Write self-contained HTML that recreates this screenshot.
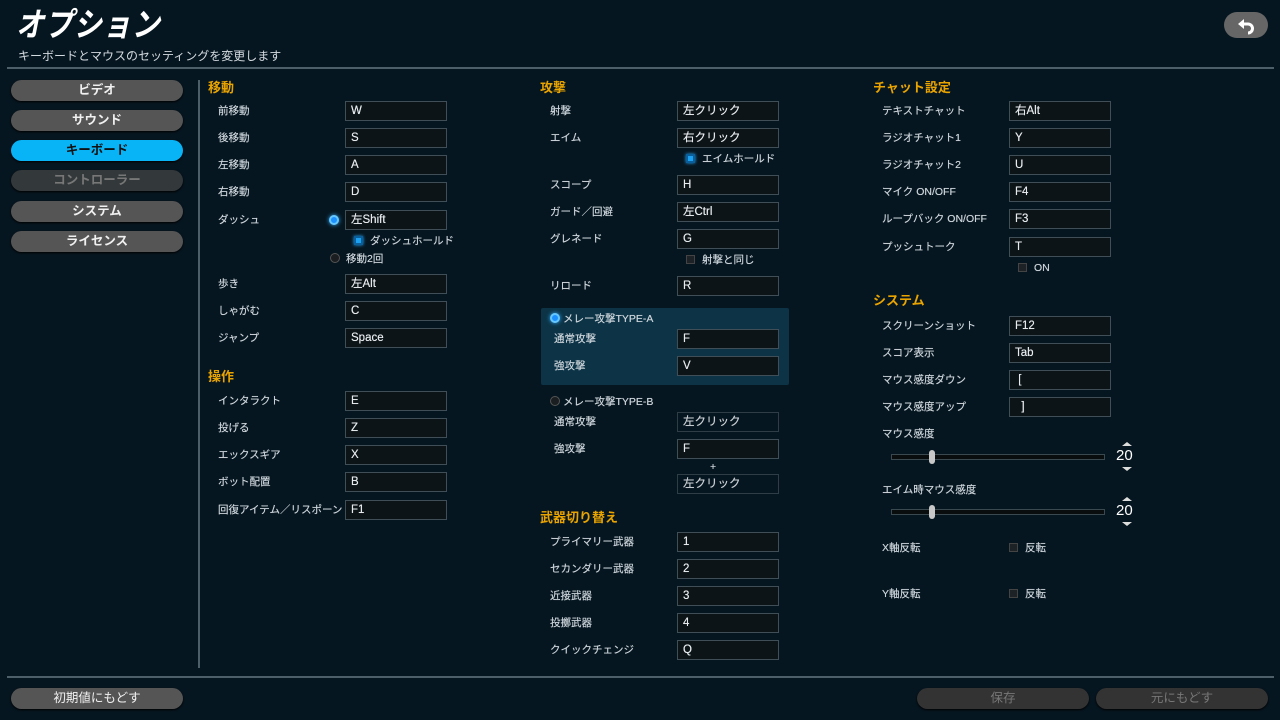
<!DOCTYPE html>
<html><head><meta charset="utf-8"><style>
body{margin:0;width:1280px;height:720px;background:#061620;position:relative;overflow:hidden;font-family:"Liberation Sans","Noto Sans CJK JP",sans-serif;color:#d7dde2;font-weight:bold}
div{position:absolute;box-sizing:border-box;white-space:nowrap}
.l{font-size:10.5px;line-height:16px;color:#ccd4da;font-weight:normal;margin-top:1px;text-shadow:0 0 0.4px #ccd4da}
.h{font-size:13px;line-height:18px;color:#eaa400}
.i{width:102px;height:20px;background:#0c1418;border:1px solid #404e57;font-size:11.5px;line-height:18px;padding-left:5px;color:#e8ecef;font-weight:normal;text-shadow:0 0 0.4px #e8ecef}
.i.d{background:transparent;border-color:#2f3d46;color:#c8ced2}
.b{height:21px;border-radius:11px;background:#555;color:#f0f0f0;font-size:12.5px;line-height:21px;text-align:center;box-shadow:0 1px 2px #000}
.cb{width:9px;height:9px;border:1px solid #444;background:#1c2226}
.cbb{width:9px;height:9px;background:#1ea0f0;border:2px solid #0a5e9a;box-shadow:0 0 3px #2aaaff}
.rb{width:10px;height:10px;border-radius:50%;background:#1c90ff;border:2px solid #66c8ff;box-shadow:0 0 4px #39b0ff}
.re{width:10px;height:10px;border-radius:50%;background:#1a1e20;border:1px solid #555}
.line{height:2px;background:#4d5f69;left:7px;width:1267px}
</style></head><body>
<div style="left:16px;top:4px;font-size:33px;line-height:42px;color:#fff;font-style:italic;letter-spacing:1px;font-weight:bold;transform:scaleX(0.85);transform-origin:0 0">オプション</div>
<div style="left:18px;top:48px;font-size:12px;line-height:16px;color:#d4dbe0;font-weight:normal">キーボードとマウスのセッティングを変更します</div>
<div style="left:1224px;top:12px;width:44px;height:26px;border-radius:13px;background:#666"><svg width="44" height="26" viewBox="0 0 44 26" style="position:absolute;left:0;top:0"><path d="M20 7 L14 12 L20 17 Z" fill="#fff"/><path d="M18 12 H24 A4.5 4.5 0 0 1 24 21" stroke="#fff" stroke-width="3" fill="none"/></svg></div>
<div class="line" style="top:67px"></div>
<div class="line" style="top:676px"></div>
<div style="left:198px;top:80px;width:2px;height:588px;background:#4d5f69"></div>

<div class="b" style="left:11px;top:80px;width:172px">ビデオ</div>
<div class="b" style="left:11px;top:110px;width:172px">サウンド</div>
<div class="b" style="left:11px;top:140px;width:172px;background:#08b4f6;color:#111">キーボード</div>
<div class="b" style="left:11px;top:170px;width:172px;background:#33383a;color:#777">コントローラー</div>
<div class="b" style="left:11px;top:201px;width:172px">システム</div>
<div class="b" style="left:11px;top:231px;width:172px">ライセンス</div>
<div class="b" style="left:11px;top:688px;width:172px;font-weight:normal">初期値にもどす</div>
<div class="b" style="left:917px;top:688px;width:172px;background:#333;color:#777;font-weight:normal">保存</div>
<div class="b" style="left:1096px;top:688px;width:172px;background:#333;color:#777;font-weight:normal">元にもどす</div>

<!-- left -->
<div class="h" style="left:208px;top:79px">移動</div>
<div class="l" style="left:218px;top:102px">前移動</div><div class="i" style="left:345px;top:101px">W</div>
<div class="l" style="left:218px;top:129px">後移動</div><div class="i" style="left:345px;top:128px">S</div>
<div class="l" style="left:218px;top:156px">左移動</div><div class="i" style="left:345px;top:155px">A</div>
<div class="l" style="left:218px;top:183px">右移動</div><div class="i" style="left:345px;top:182px">D</div>
<div class="l" style="left:218px;top:211px">ダッシュ</div><div class="rb" style="left:329px;top:215px"></div><div class="i" style="left:345px;top:210px">左Shift</div>
<div class="cbb" style="left:354px;top:236px"></div><div class="l" style="left:370px;top:232px">ダッシュホールド</div>
<div class="re" style="left:330px;top:253px"></div><div class="l" style="left:346px;top:250px">移動2回</div>
<div class="l" style="left:218px;top:275px">歩き</div><div class="i" style="left:345px;top:274px">左Alt</div>
<div class="l" style="left:218px;top:302px">しゃがむ</div><div class="i" style="left:345px;top:301px">C</div>
<div class="l" style="left:218px;top:329px">ジャンプ</div><div class="i" style="left:345px;top:328px">Space</div>
<div class="h" style="left:208px;top:368px">操作</div>
<div class="l" style="left:218px;top:392px">インタラクト</div><div class="i" style="left:345px;top:391px">E</div>
<div class="l" style="left:218px;top:419px">投げる</div><div class="i" style="left:345px;top:418px">Z</div>
<div class="l" style="left:218px;top:446px">エックスギア</div><div class="i" style="left:345px;top:445px">X</div>
<div class="l" style="left:218px;top:473px">ボット配置</div><div class="i" style="left:345px;top:472px">B</div>
<div class="l" style="left:218px;top:501px">回復アイテム／リスポーン</div><div class="i" style="left:345px;top:500px">F1</div>

<!-- middle -->
<div class="h" style="left:540px;top:79px">攻撃</div>
<div class="l" style="left:550px;top:102px">射撃</div><div class="i" style="left:677px;top:101px">左クリック</div>
<div class="l" style="left:550px;top:129px">エイム</div><div class="i" style="left:677px;top:128px">右クリック</div>
<div class="cbb" style="left:686px;top:154px"></div><div class="l" style="left:702px;top:150px">エイムホールド</div>
<div class="l" style="left:550px;top:176px">スコープ</div><div class="i" style="left:677px;top:175px">H</div>
<div class="l" style="left:550px;top:203px">ガード／回避</div><div class="i" style="left:677px;top:202px">左Ctrl</div>
<div class="l" style="left:550px;top:230px">グレネード</div><div class="i" style="left:677px;top:229px">G</div>
<div class="cb" style="left:686px;top:255px"></div><div class="l" style="left:702px;top:251px">射撃と同じ</div>
<div class="l" style="left:550px;top:277px">リロード</div><div class="i" style="left:677px;top:276px">R</div>
<div style="left:541px;top:308px;width:248px;height:77px;background:#0c3346;border-radius:2px"></div>
<div class="rb" style="left:550px;top:313px"></div><div class="l" style="left:563px;top:310px">メレー攻撃TYPE-A</div>
<div class="l" style="left:554px;top:330px">通常攻撃</div><div class="i" style="left:677px;top:329px">F</div>
<div class="l" style="left:554px;top:357px">強攻撃</div><div class="i" style="left:677px;top:356px">V</div>
<div class="re" style="left:550px;top:396px"></div><div class="l" style="left:563px;top:393px">メレー攻撃TYPE-B</div>
<div class="l" style="left:554px;top:413px">通常攻撃</div><div class="i d" style="left:677px;top:412px">左クリック</div>
<div class="l" style="left:554px;top:440px">強攻撃</div><div class="i" style="left:677px;top:439px">F</div>
<div class="l" style="left:710px;top:458px">+</div>
<div class="i d" style="left:677px;top:474px">左クリック</div>
<div class="h" style="left:540px;top:509px">武器切り替え</div>
<div class="l" style="left:550px;top:533px">プライマリー武器</div><div class="i" style="left:677px;top:532px">1</div>
<div class="l" style="left:550px;top:560px">セカンダリー武器</div><div class="i" style="left:677px;top:559px">2</div>
<div class="l" style="left:550px;top:587px">近接武器</div><div class="i" style="left:677px;top:586px">3</div>
<div class="l" style="left:550px;top:614px">投擲武器</div><div class="i" style="left:677px;top:613px">4</div>
<div class="l" style="left:550px;top:641px">クイックチェンジ</div><div class="i" style="left:677px;top:640px">Q</div>

<!-- right -->
<div class="h" style="left:873px;top:79px">チャット設定</div>
<div class="l" style="left:882px;top:102px">テキストチャット</div><div class="i" style="left:1009px;top:101px">右Alt</div>
<div class="l" style="left:882px;top:129px">ラジオチャット1</div><div class="i" style="left:1009px;top:128px">Y</div>
<div class="l" style="left:882px;top:156px">ラジオチャット2</div><div class="i" style="left:1009px;top:155px">U</div>
<div class="l" style="left:882px;top:183px">マイク ON/OFF</div><div class="i" style="left:1009px;top:182px">F4</div>
<div class="l" style="left:882px;top:210px">ループバック ON/OFF</div><div class="i" style="left:1009px;top:209px">F3</div>
<div class="l" style="left:882px;top:238px">プッシュトーク</div><div class="i" style="left:1009px;top:237px">T</div>
<div class="cb" style="left:1018px;top:263px"></div><div class="l" style="left:1034px;top:259px">ON</div>
<div class="h" style="left:873px;top:292px">システム</div>
<div class="l" style="left:882px;top:317px">スクリーンショット</div><div class="i" style="left:1009px;top:316px">F12</div>
<div class="l" style="left:882px;top:344px">スコア表示</div><div class="i" style="left:1009px;top:343px">Tab</div>
<div class="l" style="left:882px;top:371px">マウス感度ダウン</div><div class="i" style="left:1009px;top:370px">&nbsp;[</div>
<div class="l" style="left:882px;top:398px">マウス感度アップ</div><div class="i" style="left:1009px;top:397px">&nbsp;&nbsp;]</div>
<div class="l" style="left:882px;top:425px">マウス感度</div>
<div style="left:891px;top:454px;width:214px;height:6px;background:#0a0d0e;border:1px solid #3a4850"></div>
<div style="left:929px;top:450px;width:6px;height:14px;border-radius:3px;background:#c8c8c8"></div>
<div style="left:1116px;top:446px;font-size:15px;line-height:20px;color:#fff;font-weight:normal">20</div>
<div style="left:1122px;top:442px;width:0;height:0;border-left:5px solid transparent;border-right:5px solid transparent;border-bottom:4px solid #ddd"></div>
<div style="left:1122px;top:467px;width:0;height:0;border-left:5px solid transparent;border-right:5px solid transparent;border-top:4px solid #ddd"></div>
<div class="l" style="left:882px;top:481px">エイム時マウス感度</div>
<div style="left:891px;top:509px;width:214px;height:6px;background:#0a0d0e;border:1px solid #3a4850"></div>
<div style="left:929px;top:505px;width:6px;height:14px;border-radius:3px;background:#c8c8c8"></div>
<div style="left:1116px;top:501px;font-size:15px;line-height:20px;color:#fff;font-weight:normal">20</div>
<div style="left:1122px;top:497px;width:0;height:0;border-left:5px solid transparent;border-right:5px solid transparent;border-bottom:4px solid #ddd"></div>
<div style="left:1122px;top:522px;width:0;height:0;border-left:5px solid transparent;border-right:5px solid transparent;border-top:4px solid #ddd"></div>
<div class="l" style="left:882px;top:539px">X軸反転</div><div class="cb" style="left:1009px;top:543px"></div><div class="l" style="left:1025px;top:539px">反転</div>
<div class="l" style="left:882px;top:585px">Y軸反転</div><div class="cb" style="left:1009px;top:589px"></div><div class="l" style="left:1025px;top:585px">反転</div>
</body></html>
